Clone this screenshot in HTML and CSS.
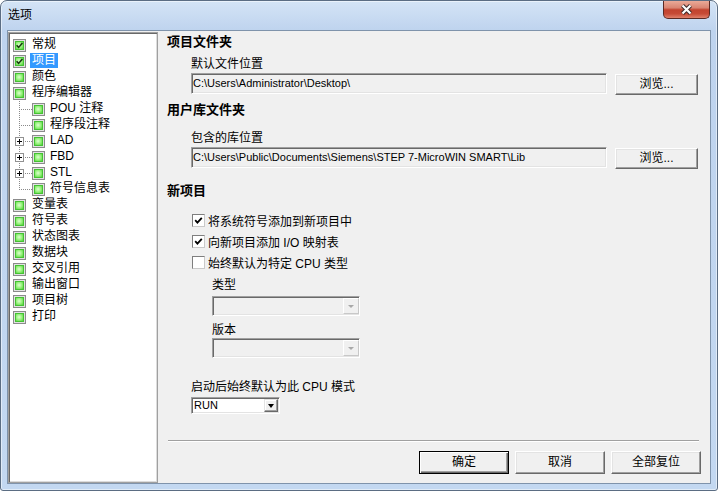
FILE: index.html
```html
<!DOCTYPE html>
<html lang="zh-CN">
<head>
<meta charset="utf-8">
<title>选项</title>
<link rel="stylesheet" href="styles.css">
</head>
<body>
<svg class="defs" width="0" height="0" aria-hidden="true">
  <defs>
    <radialGradient id="gfill" cx="0.45" cy="0.45" r="0.75">
      <stop offset="0" stop-color="#dcffcf"/>
      <stop offset="0.5" stop-color="#93f078"/>
      <stop offset="1" stop-color="#3fca2b"/>
    </radialGradient>
    <symbol id="ico" viewBox="0 0 13 13">
      <rect x="0.5" y="0.5" width="12" height="12" fill="#e2e2e2" stroke="#8b8b8b"/>
      <rect x="2.5" y="2.5" width="8" height="8" fill="url(#gfill)" stroke="#45c234"/>
    </symbol>
    <symbol id="icoc" viewBox="0 0 13 13">
      <rect x="0.5" y="0.5" width="12" height="12" fill="#e2e2e2" stroke="#8b8b8b"/>
      <rect x="2.5" y="2.5" width="8" height="8" fill="url(#gfill)" stroke="#45c234"/>
      <path d="M3.6 6.2 L5.6 8.4 L9.4 4" fill="none" stroke="#1a3a12" stroke-width="1.6"/>
    </symbol>
    <symbol id="plus" viewBox="0 0 9 9">
      <rect x="0.5" y="0.5" width="8" height="8" fill="#fff" stroke="#919191"/>
      <path d="M2 4.5 H7 M4.5 2 V7" stroke="#000" stroke-width="1"/>
    </symbol>
    <symbol id="chk" viewBox="0 0 9 9">
      <path d="M1.2 4.2 L3.4 6.6 L7.8 1.8" fill="none" stroke="#000" stroke-width="1.8"/>
    </symbol>
  </defs>
</svg>
<div class="window">
  <div class="titlebar">
    <span class="title">选项</span>
    <span class="close">
      <svg width="13" height="11" viewBox="0 0 13 11">
        <path d="M2.5 1.5 L10.5 9.5 M10.5 1.5 L2.5 9.5" stroke="#3d2a2a" stroke-width="4.2"/>
        <path d="M2.5 1.5 L10.5 9.5 M10.5 1.5 L2.5 9.5" stroke="#ffffff" stroke-width="2.2"/>
      </svg>
    </span>
  </div>
  <div class="client">
    <div class="tree">
      <div class="row"><svg class="ico"><use href="#icoc"/></svg><span class="t">常规</span></div>
      <div class="row"><svg class="ico"><use href="#icoc"/></svg><span class="t sel">项目</span></div>
      <div class="row"><svg class="ico"><use href="#ico"/></svg><span class="t">颜色</span></div>
      <div class="row"><svg class="ico"><use href="#ico"/></svg><span class="t">程序编辑器</span></div>
      <div class="row child"><span class="conn"></span><svg class="ico"><use href="#ico"/></svg><span class="t">POU 注释</span></div>
      <div class="row child"><span class="conn"></span><svg class="ico"><use href="#ico"/></svg><span class="t">程序段注释</span></div>
      <div class="row child"><span class="conn"><svg class="plus"><use href="#plus"/></svg></span><svg class="ico"><use href="#ico"/></svg><span class="t">LAD</span></div>
      <div class="row child"><span class="conn"><svg class="plus"><use href="#plus"/></svg></span><svg class="ico"><use href="#ico"/></svg><span class="t">FBD</span></div>
      <div class="row child"><span class="conn"><svg class="plus"><use href="#plus"/></svg></span><svg class="ico"><use href="#ico"/></svg><span class="t">STL</span></div>
      <div class="row child"><span class="conn last"></span><svg class="ico"><use href="#ico"/></svg><span class="t">符号信息表</span></div>
      <div class="row"><svg class="ico"><use href="#ico"/></svg><span class="t">变量表</span></div>
      <div class="row"><svg class="ico"><use href="#ico"/></svg><span class="t">符号表</span></div>
      <div class="row"><svg class="ico"><use href="#ico"/></svg><span class="t">状态图表</span></div>
      <div class="row"><svg class="ico"><use href="#ico"/></svg><span class="t">数据块</span></div>
      <div class="row"><svg class="ico"><use href="#ico"/></svg><span class="t">交叉引用</span></div>
      <div class="row"><svg class="ico"><use href="#ico"/></svg><span class="t">输出窗口</span></div>
      <div class="row"><svg class="ico"><use href="#ico"/></svg><span class="t">项目树</span></div>
      <div class="row"><svg class="ico"><use href="#ico"/></svg><span class="t">打印</span></div>
    </div>
    <div class="main">
      <div class="h h1">项目文件夹</div>
      <div class="lbl ind l1">默认文件位置</div>
      <div class="pathrow">
        <div class="path">C:\Users\Administrator\Desktop\</div>
        <button class="btn browse">浏览...</button>
      </div>
      <div class="h h2">用户库文件夹</div>
      <div class="lbl ind l2">包含的库位置</div>
      <div class="pathrow">
        <div class="path">C:\Users\Public\Documents\Siemens\STEP 7-MicroWIN SMART\Lib</div>
        <button class="btn browse">浏览...</button>
      </div>
      <div class="h h3">新项目</div>
      <div class="checks">
        <div class="chkrow"><span class="box"><svg class="mark"><use href="#chk"/></svg></span><span>将系统符号添加到新项目中</span></div>
        <div class="chkrow"><span class="box"><svg class="mark"><use href="#chk"/></svg></span><span>向新项目添加 I/O 映射表</span></div>
        <div class="chkrow"><span class="box"></span><span>始终默认为特定 CPU 类型</span></div>
      </div>
      <div class="sub">
        <div class="lbl s1">类型</div>
        <div class="combo dis"><span class="ctext"></span><span class="cbtn"><span class="arrow"></span></span></div>
        <div class="lbl s2">版本</div>
        <div class="combo dis c2"><span class="ctext"></span><span class="cbtn"><span class="arrow"></span></span></div>
      </div>
      <div class="lbl ind l3">启动后始终默认为此 CPU 模式</div>
      <div class="combo run"><span class="ctext">RUN</span><span class="cbtn"><span class="arrow"></span></span></div>
      <div class="footer">
        <div class="sep"></div>
        <div class="btns">
          <button class="btn big def">确定</button>
          <button class="btn big">取消</button>
          <button class="btn big">全部复位</button>
        </div>
      </div>
    </div>
  </div>
</div>
</body>
</html>
```

FILE: styles.css
```css
* { box-sizing: border-box; }
html, body { margin: 0; padding: 0; }
body {
  width: 718px;
  height: 491px;
  overflow: hidden;
  font-family: "Liberation Sans", "Noto Sans CJK SC", sans-serif;
  font-size: 12px;
  color: #000;
  background: #fff;
}
.defs { display: block; width: 0; height: 0; overflow: hidden; }

.window {
  width: 718px;
  height: 491px;
  display: flex;
  flex-direction: column;
  border: 1px solid #5b6d83;
  border-radius: 7px 7px 3px 3px;
  background: linear-gradient(to bottom, #d4e4f6 0, #bed3ee 30px, #c3d8f1 100%);
  box-shadow: inset 0 0 0 1px rgba(255, 255, 255, 0.5);
}
.titlebar {
  flex: none;
  height: 29px;
  display: flex;
  align-items: flex-start;
  padding-left: 7px;
}
.title { margin-top: 6px; line-height: 16px; font-size: 12px; }
.close {
  margin-left: auto;
  margin-right: 7px;
  width: 47px;
  height: 18px;
  border: 1px solid #5b2a24;
  border-top: none;
  border-radius: 0 0 5px 5px;
  background: linear-gradient(to bottom, #eaaa98 0%, #d98572 40%, #c2432f 52%, #c64a35 75%, #e0806a 100%);
  display: flex;
  align-items: center;
  justify-content: center;
}

.client {
  flex: 1;
  margin: 0 6px 6px 6px;
  border: 1px solid #7f93ab;
  display: flex;
  background: #f0f0f0;
}

/* tree */
.tree {
  flex: none;
  width: 150px;
  margin-top: 1px;
  border: 1px solid #a0a0a0;
  box-shadow: inset 1px 1px #696969, inset -1px -1px #dcdcdc;
  background: #fff;
  padding: 4px 0 0 4px;
}
.row { display: flex; align-items: flex-start; height: 16px; }
.ico { flex: none; width: 13px; height: 13px; margin-top: 2px; }
.t {
  display: inline-block;
  height: 15px;
  line-height: 15px;
  padding: 0 2px;
  margin-left: 4px;
  white-space: nowrap;
}
.child .t { margin-left: 3px; }
.t.sel { background: #3399ff; color: #fff; }
.conn {
  flex: none;
  width: 19px;
  height: 16px;
  display: flex;
  align-items: flex-start;
  background-image:
    repeating-linear-gradient(to bottom, #8a8a8a 0 1px, transparent 1px 2px),
    repeating-linear-gradient(to right, #8a8a8a 0 1px, transparent 1px 2px);
  background-size: 1px 16px, 13px 1px;
  background-position: 6px 0, 6px 8px;
  background-repeat: no-repeat;
}
.conn.last { background-size: 1px 9px, 13px 1px; }
.plus { width: 9px; height: 9px; margin: 4px 0 0 2px; }

/* main */
.main {
  flex: 1;
  display: flex;
  flex-direction: column;
  padding: 0 12px 9px 9px;
}
.h { font-weight: bold; font-size: 13px; line-height: 16px; height: 16px; }
.h1 { margin-top: 3px; }
.h2 { margin-top: 7px; }
.h3 { margin-top: 14px; }
.lbl { line-height: 16px; height: 16px; white-space: nowrap; }
.ind { margin-left: 24px; }
.l1 { margin-top: 6px; }
.l2 { margin-top: 12px; }
.l3 { margin-top: 21px; }

.pathrow { display: flex; gap: 8px; margin-left: 24px; margin-top: 1px; }
.path {
  flex: 1;
  height: 21px;
  border: 1px solid;
  border-color: #a0a0a0 #fff #fff #a0a0a0;
  box-shadow: inset 1px 1px #696969, inset -1px -1px #e3e3e3;
  background: #f0f0f0;
  padding: 0 1px;
  line-height: 19px;
  font-size: 11px;
  white-space: nowrap;
  overflow: hidden;
}
.btn {
  font-family: inherit;
  font-size: 12px;
  color: #000;
  background: #f0f0f0;
  border: 1px solid;
  border-color: #fff #696969 #696969 #fff;
  box-shadow: inset -1px -1px #a0a0a0, inset 1px 1px #e3e3e3;
  border-radius: 0;
  padding: 0;
  margin: 0;
  height: 21px;
  line-height: 19px;
}
.browse { flex: none; width: 83px; margin-top: 1px; }

.checks { margin-top: 11px; margin-left: 25px; }
.chkrow { height: 21px; display: flex; align-items: center; white-space: nowrap; }
.box {
  flex: none;
  width: 13px;
  height: 13px;
  margin-right: 3px;
  border: 1px solid;
  border-color: #7e7e7e #c9c9c9 #c9c9c9 #7e7e7e;
  background: #fff;
  display: flex;
  align-items: center;
  justify-content: center;
}
.mark { width: 9px; height: 9px; }

.sub { margin-left: 45px; }
.s1 { margin-top: 4px; }
.s2 { margin-top: 6px; }

.combo {
  display: flex;
  width: 148px;
  height: 20px;
  margin-top: 3px;
  border: 1px solid;
  border-color: #a0a0a0 #fff #fff #a0a0a0;
  box-shadow: inset 1px 1px #696969, inset -1px -1px #e3e3e3;
  background: #f0f0f0;
  padding: 1px 0 1px 1px;
}
.combo.c2 { margin-top: 0; }
.ctext { flex: 1; font-size: 11px; line-height: 15px; padding-left: 1px; }
.cbtn {
  flex: none;
  width: 16px;
  border: 1px solid;
  border-color: #fff #c8c8c8 #c8c8c8 #fff;
  background: #f0f0f0;
  display: flex;
  align-items: center;
  justify-content: center;
}
.arrow {
  width: 0;
  height: 0;
  border-left: 3px solid transparent;
  border-right: 3px solid transparent;
  border-top: 3px solid #a8a8a8;
}
.combo.run {
  width: 89px;
  height: 17px;
  margin-top: 2px;
  margin-left: 24px;
  background: #fff;
  padding: 1px 1px 1px 1px;
}
.run .ctext { line-height: 13px; }
.run .cbtn {
  width: 14px;
  border-color: #e3e3e3 #696969 #696969 #e3e3e3;
  box-shadow: inset -1px -1px #a0a0a0, inset 1px 1px #fff;
}
.run .arrow {
  border-left-width: 3.5px;
  border-right-width: 3.5px;
  border-top: 4px solid #000;
}

.footer { margin-top: auto; }
.sep {
  height: 2px;
  border-top: 1px solid #a0a0a0;
  border-bottom: 1px solid #fff;
  margin: 0 -1px 0 1px;
}
.btns {
  display: flex;
  justify-content: flex-end;
  gap: 6px;
  margin-top: 9px;
  margin-right: -3px;
}
.big { width: 90px; height: 23px; line-height: 21px; }
.def {
  border-color: #000;
  box-shadow: inset 1px 1px #fff, inset -1px -1px #696969, inset -2px -2px #a0a0a0;
}
```
